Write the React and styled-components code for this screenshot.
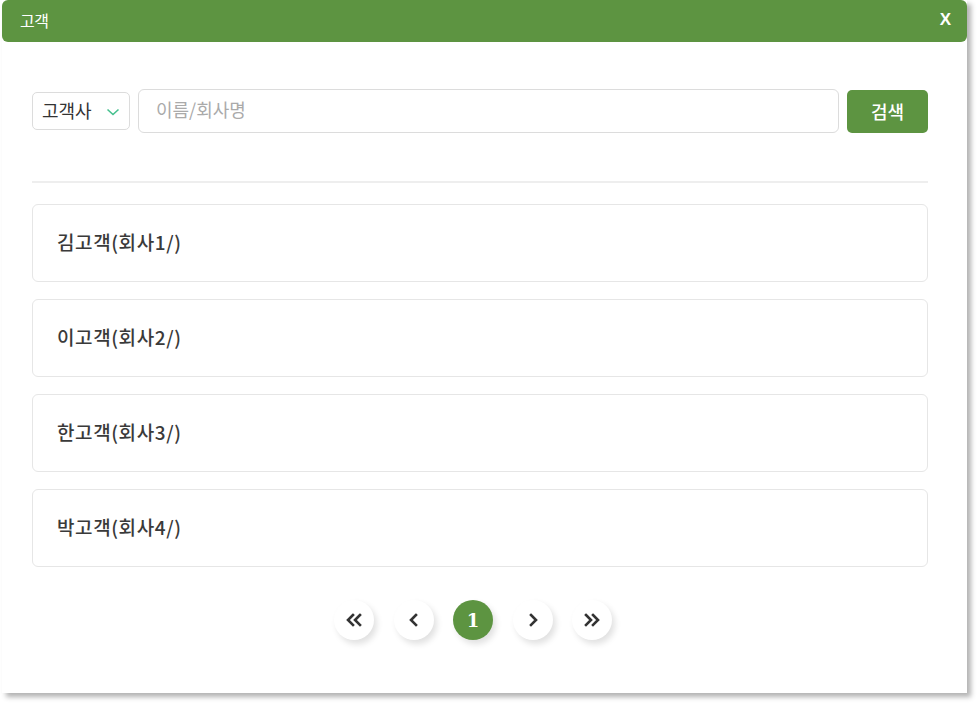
import React from "react"
import styled, { createGlobalStyle } from "styled-components"

const GlobalStyle = createGlobalStyle`
	body {
		margin: 0;
		background: #ffffff;
		font-family: "Noto Sans CJK KR", "Noto Sans", sans-serif;
	}
	* {
		box-sizing: border-box;
	}
`

const Page = styled.div`
	padding-left: 2px;
	width: 978px;
	height: 705px;
`
const Dialog = styled.div`
	width: 965px;
	height: 693px;
	background: #ffffff;
	box-shadow: 4px 4px 5px rgba(0, 0, 0, 0.3);
	display: flex;
	flex-direction: column;
`
const Header = styled.div`
	height: 42px;
	background-color: #5d9441;
	border-radius: 6px;
	display: flex;
	align-items: center;
	justify-content: space-between;
	padding: 0 16px 2px 18px;
	color: #ffffff;
`
const Title = styled.span`
	font-size: 16px;
	letter-spacing: -0.5px;
`
const Close = styled.button`
	background: none;
	border: none;
	color: #ffffff;
	font-family: "Liberation Sans", Arial, sans-serif;
	font-weight: bold;
	font-size: 17px;
	padding: 0;
	cursor: pointer;
`
const Body = styled.div`
	padding: 47px 39px 0 30px;
	display: flex;
	flex-direction: column;
`
const SearchRow = styled.div`
	display: flex;
	align-items: center;
	gap: 8px;
	height: 44px;
`
const Select = styled.div`
	width: 98px;
	height: 38px;
	border: 1px solid #dcdcdc;
	border-radius: 5px;
	display: flex;
	align-items: center;
	justify-content: space-between;
	padding: 0 9px 2px 9px;
	font-size: 18px;
	color: #333333;
`
const Input = styled.input`
	flex: 1;
	height: 44px;
	border: 1px solid #dcdcdc;
	border-radius: 6px;
	padding: 0 17px 4px;
	font-family: inherit;
	font-size: 18px;
	color: #333333;
	outline: none;
	&::placeholder {
		color: #aaaaaa;
	}
`
const SearchButton = styled.button`
	width: 81px;
	height: 43px;
	background-color: #5d9441;
	border: none;
	border-radius: 5px;
	color: #ffffff;
	font-family: inherit;
	font-size: 18px;
	font-weight: 500;
	padding-bottom: 2px;
	cursor: pointer;
`
const Divider = styled.hr`
	margin: 48px 0 21px;
	border: none;
	border-top: 2px solid #eeeeee;
`
const List = styled.div`
	display: flex;
	flex-direction: column;
	gap: 17px;
`
const Item = styled.div`
	height: 78px;
	border: 1px solid #e6e6e6;
	border-radius: 6px;
	display: flex;
	align-items: center;
	padding: 0 0 4px 24px;
	font-size: 19px;
	font-weight: 500;
	color: #3a3a3a;
	letter-spacing: 0.6px;
`
const Pager = styled.div`
	display: flex;
	justify-content: center;
	gap: 19.5px;
	margin-top: 33px;
	padding-right: 14px;
`
const PageButton = styled.button`
	width: 40px;
	height: 40px;
	border-radius: 50%;
	border: none;
	padding: 0;
	display: flex;
	align-items: center;
	justify-content: center;
	background-color: ${(p) => (p.active ? "#5d9441" : "#ffffff")};
	color: ${(p) => (p.active ? "#ffffff" : "#333333")};
	box-shadow: 3px 4px 6px rgba(0, 0, 0, 0.12);
	font-family: "DejaVu Serif", "Liberation Serif", serif;
	font-weight: bold;
	font-size: 18px;
	cursor: pointer;
`

const Chevron = () => (
	<svg width="14" height="12" viewBox="0 0 14 12" style={{ marginTop: 4 }}>
		<polyline points="1.5,3.5 7,8.5 12.5,3.5" fill="none" stroke="#45c08e" strokeWidth="1.6" />
	</svg>
)

const Arrow = ({ dir, double }) => {
	const flip = dir === "left" ? "scale(-1,1) translate(-18,0)" : ""
	return (
		<svg width="18" height="16" viewBox="0 0 18 16">
			<g transform={flip} fill="none" stroke="#333333" strokeWidth="2.6" strokeLinecap="square">
				{double ? (
					<>
						<polyline points="3,3 8,8 3,13" />
						<polyline points="10,3 15,8 10,13" />
					</>
				) : (
					<polyline points="7,3 12,8 7,13" />
				)}
			</g>
		</svg>
	)
}

const customers = ["김고객(회사1/)", "이고객(회사2/)", "한고객(회사3/)", "박고객(회사4/)"]

const App = () => {
	return (
		<Page>
			<GlobalStyle />
			<Dialog>
				<Header>
					<Title>고객</Title>
					<Close>X</Close>
				</Header>
				<Body>
					<SearchRow>
						<Select>
							<span>고객사</span>
							<Chevron />
						</Select>
						<Input placeholder="이름/회사명" />
						<SearchButton>검색</SearchButton>
					</SearchRow>
					<Divider />
					<List>
						{customers.map((c) => (
							<Item key={c}>{c}</Item>
						))}
					</List>
					<Pager>
						<PageButton>
							<Arrow dir="left" double />
						</PageButton>
						<PageButton>
							<Arrow dir="left" />
						</PageButton>
						<PageButton active>1</PageButton>
						<PageButton>
							<Arrow dir="right" />
						</PageButton>
						<PageButton>
							<Arrow dir="right" double />
						</PageButton>
					</Pager>
				</Body>
			</Dialog>
		</Page>
	)
}

export default App
